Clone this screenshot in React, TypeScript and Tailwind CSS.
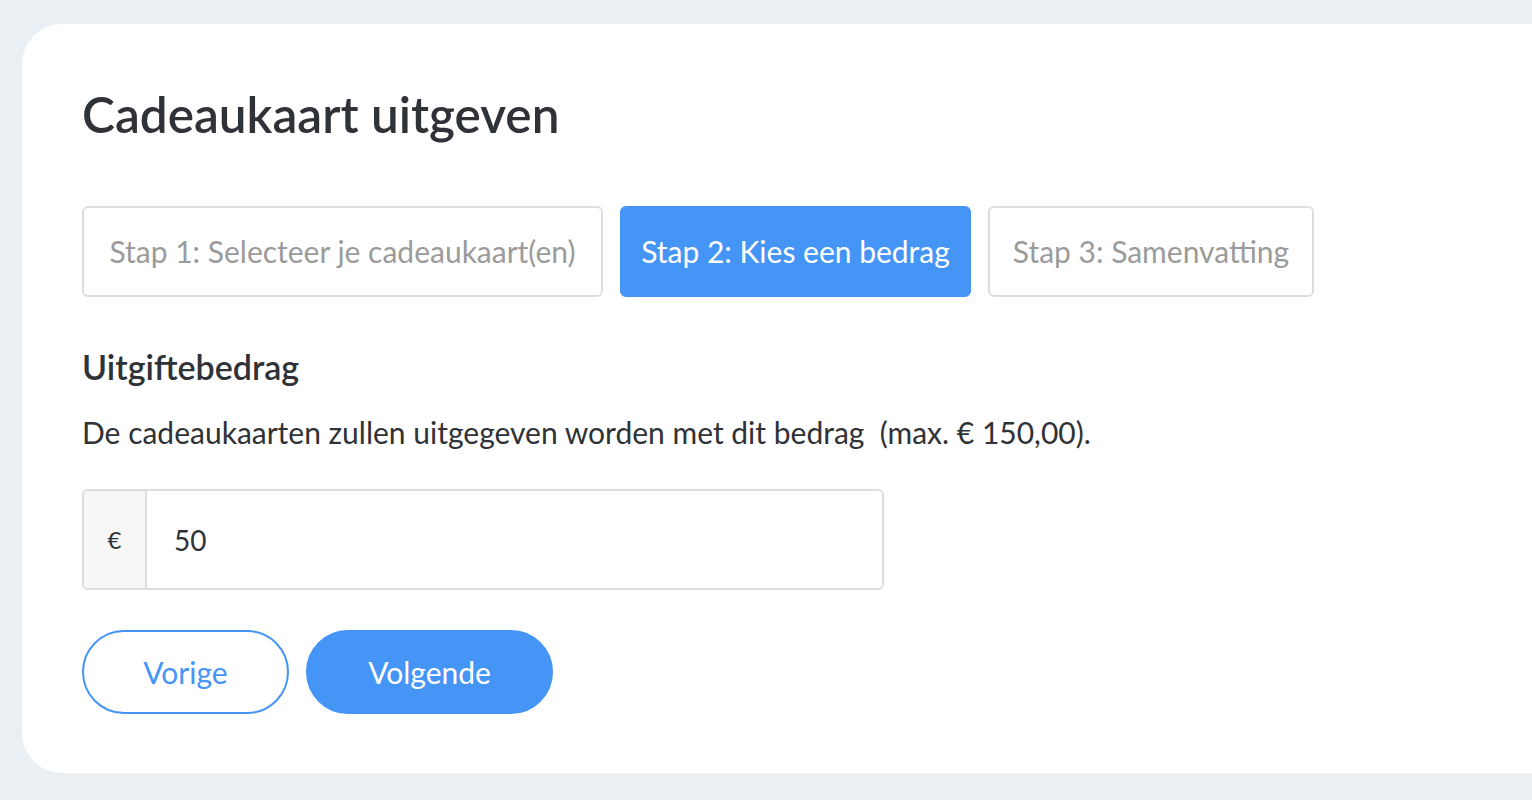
import { useState } from 'react';

const steps = [
  { label: 'Stap 1: Selecteer je cadeaukaart(en)', active: false, width: 'w-[521px]' },
  { label: 'Stap 2: Kies een bedrag', active: true, width: 'w-[351px]' },
  { label: 'Stap 3: Samenvatting', active: false, width: 'w-[326px]' },
];

export default function App() {
  const [amount, setAmount] = useState('50');

  return (
    <div
      className="min-h-screen bg-[#e9eff2] pt-[24px] pl-[22px]"
      style={{ fontFamily: 'Lato, "Open Sans", sans-serif' }}
    >
      <div className="h-[749px] rounded-l-[40px] bg-white pl-[60px] pt-[60px]">
        <h1 className="text-[49.5px] leading-[60px] font-semibold text-[#2f3237]">Cadeaukaart uitgeven</h1>

        {/* stepper */}
        <div className="mt-[62px] flex gap-[17px]">
          {steps.map((s) => (
            <div
              key={s.label}
              className={
                (s.active
                  ? 'border-[#4595f7] bg-[#4595f7] text-white'
                  : 'border-[#dddddd] bg-white text-[#9b9b9b]') +
                ' flex h-[91px] items-center justify-center rounded-[6px] border-2 text-[30px] ' +
                s.width
              }
            >
              {s.label}
            </div>
          ))}
        </div>

        <h2 className="mt-[50px] text-[34px] leading-[40px] font-semibold text-[#2f3237]">Uitgiftebedrag</h2>
        <p className="mt-[27px] text-[30px] leading-[36px] text-[#2f3237]">
          De cadeaukaarten zullen uitgegeven worden met dit bedrag&nbsp; (max. € 150,00).
        </p>

        {/* amount input */}
        <div className="mt-[39px] flex h-[101px] w-[802px] overflow-hidden rounded-[6px] border-2 border-[#dddddd]">
          <div className="flex w-[63px] items-center justify-center border-r-2 border-[#dddddd] bg-[#f7f7f7] text-[24px] text-[#2f3237]">
            €
          </div>
          <input
            value={amount}
            onChange={(e) => setAmount(e.target.value)}
            className="flex-1 bg-white pl-[27px] text-[28px] text-[#2f3237] outline-none"
          />
        </div>

        <div className="mt-[40px] flex gap-[17px]">
          <button className="h-[84px] w-[207px] rounded-full border-2 border-[#4595f7] bg-white text-[30px] text-[#4595f7]">
            Vorige
          </button>
          <button className="h-[84px] w-[247px] rounded-full border-2 border-[#4595f7] bg-[#4595f7] text-[30px] text-white">
            Volgende
          </button>
        </div>
      </div>
    </div>
  );
}
